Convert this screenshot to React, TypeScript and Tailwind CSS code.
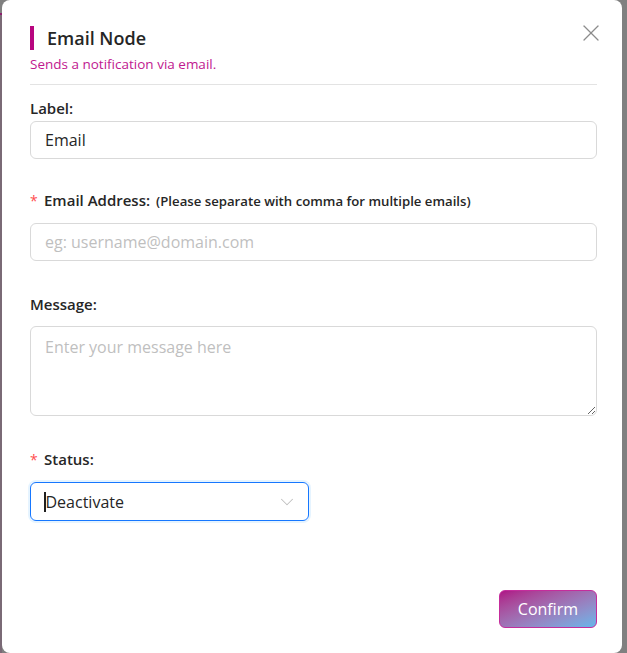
import { X, ChevronDown } from "lucide-react"

const font = { fontFamily: '"Open Sans", "Noto Sans", sans-serif' }

const App = () => {
  return (
    <div className="relative w-[627px] h-[653px] bg-[#808080] pl-[2px] pr-[5px] overflow-hidden" style={font}>
      {/* backdrop hint of the page behind */}
      <div className="absolute left-0 top-[13px] w-[2px] h-[2px] bg-[#8c1d6c]" />
      <div className="absolute left-0 top-[15px] w-[2px] h-[640px] bg-[#7a6a76]" />

      <div className="relative h-[653px] bg-white rounded-[8px] pl-[28px] pr-[25px] pt-[26px] flex flex-col">
        <button className="absolute right-[17px] top-[19px] text-[#8c8c8c]">
          <X className="w-[28px] h-[28px]" strokeWidth={1.1} />
        </button>

        {/* header */}
        <div className="flex items-center gap-[13px] h-[24px]">
          <div className="w-[4px] h-[24px] bg-[#b8067f]" />
          <h2 className="text-[18px] font-semibold text-[#262626] leading-none">Email Node</h2>
        </div>
        <p className="mt-[5px] text-[13.5px] text-[#c0188f] leading-[18px]">Sends a notification via email.</p>
        <div className="mt-[11px] border-t border-[#e3e3e3]" />

        {/* Label */}
        <label className="mt-[12px] text-[15px] font-semibold text-[#262626] leading-[22px]">Label:</label>
        <input
          defaultValue="Email"
          className="mt-[2px] h-[38px] rounded-[6px] border border-[#d9d9d9] px-[14px] text-[16px] text-[#262626] outline-none"
        />

        {/* Email address */}
        <div className="mt-[30px] flex items-baseline leading-[22px] text-[#262626]">
          <span className="text-[#ff4d4f] text-[14px] w-[14px]">*</span>
          <span className="text-[15px] font-semibold">Email Address:</span>
          <span className="ml-[6px] text-[13.2px] font-semibold">(Please separate with comma for multiple emails)</span>
        </div>
        <input
          placeholder="eg: username@domain.com"
          className="mt-[11px] h-[38px] rounded-[6px] border border-[#d9d9d9] px-[14px] text-[16px] text-[#262626] placeholder:text-[#bfbfbf] outline-none"
        />

        {/* Message */}
        <label className="mt-[32px] text-[15px] font-semibold text-[#262626] leading-[22px]">Message:</label>
        <textarea
          placeholder="Enter your message here"
          className="mt-[11px] h-[90px] rounded-[6px] border border-[#d9d9d9] px-[14px] py-[8px] text-[16px] text-[#262626] placeholder:text-[#bfbfbf] outline-none resize-y"
        />

        {/* Status */}
        <div className="mt-[32px] flex items-baseline leading-[22px] text-[#262626]">
          <span className="text-[#ff4d4f] text-[14px] w-[14px]">*</span>
          <span className="text-[15px] font-semibold">Status:</span>
        </div>
        <div className="mt-[11px] w-[279px] h-[39px] rounded-[6px] border border-[#1677ff] shadow-[0_0_0_2px_rgba(5,145,255,0.1)] flex items-center pl-[13px] pr-[10px]">
          <span className="w-[1.5px] h-[20px] bg-[#1f1f1f]" />
          <span className="flex-1 text-[16px] text-[#262626]">Deactivate</span>
          <ChevronDown className="w-[22px] h-[22px] text-[#bfbfbf]" strokeWidth={1.1} />
        </div>

        {/* footer */}
        <div className="mt-auto mb-[25px] flex justify-end">
          <button className="w-[98px] h-[38px] rounded-[6px] border border-[#c42d9c] bg-gradient-to-br from-[#ad0d86] to-[#63b6ea] text-white text-[16px]">
            Confirm
          </button>
        </div>
      </div>
    </div>
  )
}

export default App
